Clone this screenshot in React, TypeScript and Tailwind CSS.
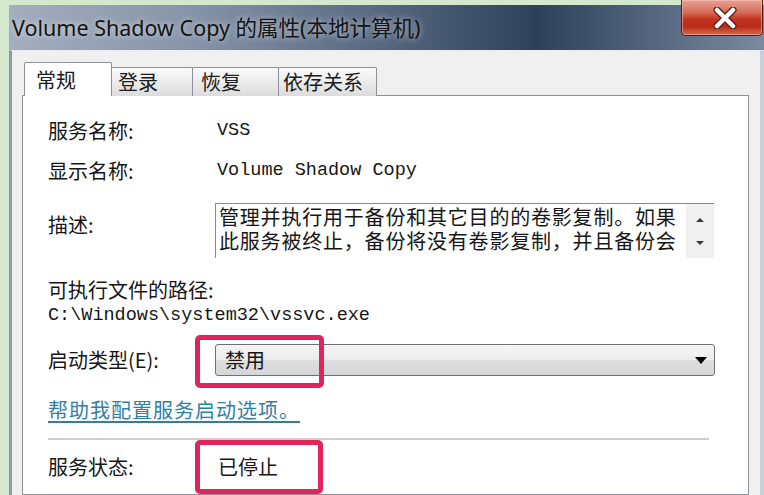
import React from "react";

const Tab = ({ label, active, width, pad }: { label: string; active?: boolean; width: string; pad: string }) => (
  <div
    className={
      active
        ? `relative z-10 ${width} h-[34px] bg-white border border-b-0 border-[#8e9197] rounded-t-[2px] flex items-center ${pad}`
        : `relative -ml-px ${width} h-[29px] bg-[linear-gradient(to_bottom,#fafafa_0%,#ececec_50%,#dcdcdc_100%)] border border-b-0 border-[#8e9197] rounded-t-[2px] flex items-center ${pad}`
    }
  >
    <span className="text-[20px] leading-none text-[#1b1b1b]">{label}</span>
  </div>
);

const Highlight = ({ className }: { className: string }) => (
  <div className={`absolute border-[5px] border-[#e0245c] rounded-[5px] pointer-events-none ${className}`} />
);

export default function App() {
  return (
    <div className="w-[764px] h-[495px] overflow-hidden bg-[#d3e8cd] flex font-['Noto_Sans_CJK_SC',sans-serif] text-[#161616]">
      <div className="w-[9px] shrink-0" />
      <div className="relative flex-1 flex flex-col pt-[5px]">
        {/* title bar */}
        <div className="h-[45px] shrink-0 flex items-center pl-[3px] bg-[linear-gradient(to_right,#a3aebe_0%,#8593a8_25%,#55667f_50%,#2f405b_70%,#56677f_86%,#7a8aa0_100%)]">
          <span className="font-['Noto_Sans','Noto_Sans_CJK_SC',sans-serif] text-[21.5px] leading-none text-[#141414] [text-shadow:0_0_6px_rgba(255,255,255,0.7)] whitespace-nowrap">
            Volume Shadow Copy 的属性(本地计算机)
          </span>
        </div>

        {/* close button */}
        <div className="absolute top-0 right-[1px] w-[82px] h-[36px] rounded-b-[5px] border border-t-0 border-[#4a1f1a] bg-[linear-gradient(to_bottom,#e6a294_0%,#d66c58_35%,#c2341f_55%,#b92a18_75%,#d56a4e_100%)] flex items-center justify-center shadow-[inset_0_0_0_1px_rgba(255,200,190,0.5)]">
          <svg width="24" height="22" viewBox="0 0 24 22" className="ml-[6px]">
            <path d="M4 3 L20 19 M20 3 L4 19" stroke="#5a1d16" strokeWidth="7" strokeLinecap="round" />
            <path d="M4 3 L20 19 M20 3 L4 19" stroke="#ffffff" strokeWidth="4.5" strokeLinecap="round" />
          </svg>
        </div>

        {/* body */}
        <div className="flex-1 flex flex-col bg-[#f0f0f0] border-l-[3px] border-l-[#8d98aa] border-r-[4px] border-r-[#c9d0d9] border-t border-t-[#e9edf2] pl-[10px] pr-[11px] pt-[11px]">
          <div className="flex items-end h-[34px] -mb-px pl-[2px]">
            <Tab label="常规" active width="w-[88px]" pad="pl-[11px]" />
            <Tab label="登录" width="w-[82px]" pad="pl-[6px]" />
            <Tab label="恢复" width="w-[87px]" pad="pl-[8px]" />
            <Tab label="依存关系" width="w-[99px]" pad="pl-[4px]" />
          </div>

          <div className="flex-1 bg-white border border-[#8e9197] pl-[25px] pt-[15px]">
            <div className="flex items-center h-[40px]">
              <div className="w-[167px] text-[20px]">服务名称:</div>
              <div className="pl-[2px] font-['Liberation_Mono',monospace] text-[18.5px]">VSS</div>
            </div>
            <div className="flex items-center h-[40px]">
              <div className="w-[167px] text-[20px]">显示名称:</div>
              <div className="pl-[2px] font-['Liberation_Mono',monospace] text-[18.5px] whitespace-nowrap">Volume Shadow Copy</div>
            </div>

            <div className="flex items-start mt-[12px]">
              <div className="w-[167px] text-[20px] pt-[7px]">描述:</div>
              <div className="w-[499px] h-[55px] flex border-t border-l border-[#8a8a8a]">
                <div className="flex-1 pl-[3px] pt-[1px] text-[20px] tracking-[0.8px] whitespace-nowrap">
                  <div className="h-[24px] leading-[24px]">管理并执行用于备份和其它目的的卷影复制。如果</div>
                  <div className="h-[24px] leading-[24px]">此服务被终止，备份将没有卷影复制，并且备份会</div>
                </div>
                <div className="w-[28px] bg-[#f0f0f0] flex flex-col items-center justify-around py-[4px]">
                  <div className="w-0 h-0 border-l-[4px] border-r-[4px] border-b-[4px] border-l-transparent border-r-transparent border-b-[#3a3a3a]" />
                  <div className="w-0 h-0 border-l-[4px] border-r-[4px] border-t-[4px] border-l-transparent border-r-transparent border-t-[#3a3a3a]" />
                </div>
              </div>
            </div>

            <div className="mt-[20px] h-[24px] leading-[24px] text-[20px]">可执行文件的路径:</div>
            <div className="mt-[2px] h-[24px] leading-[24px] font-['Liberation_Mono',monospace] text-[18.5px] whitespace-nowrap">
              C:\Windows\system32\vssvc.exe
            </div>

            <div className="flex items-center mt-[16px] h-[32px]">
              <div className="w-[167px] text-[20px]">启动类型(E):</div>
              <div className="relative w-[500px] h-[32px] rounded-[3px] border border-[#707070] bg-[linear-gradient(to_bottom,#f5f5f5_0%,#ececec_48%,#dedede_52%,#d6d6d6_100%)] flex items-center pl-[9px]">
                <span className="text-[20px]">禁用</span>
                <div className="ml-auto mr-[7px] w-0 h-0 border-l-[6px] border-r-[6px] border-t-[7px] border-l-transparent border-r-transparent border-t-black" />
                <Highlight className="left-[-21px] top-[-10px] w-[129px] h-[53px]" />
              </div>
            </div>

            <div className="mt-[22px] h-[24px] leading-[24px] text-[20px] tracking-[1px] text-[#2f7fa5] underline underline-offset-[3px]">
              帮助我配置服务启动选项。
            </div>

            <div className="mt-[16px] h-[2px] w-[661px] bg-[#cfcfcf]" />

            <div className="flex items-center mt-[15px] h-[24px]">
              <div className="w-[167px] text-[20px]">服务状态:</div>
              <div className="relative pl-[3px] text-[20px] leading-[24px]">
                已停止
                <Highlight className="left-[-20px] top-[-15px] w-[128px] h-[54px]" />
              </div>
            </div>
          </div>
        </div>
      </div>
    </div>
  );
}
